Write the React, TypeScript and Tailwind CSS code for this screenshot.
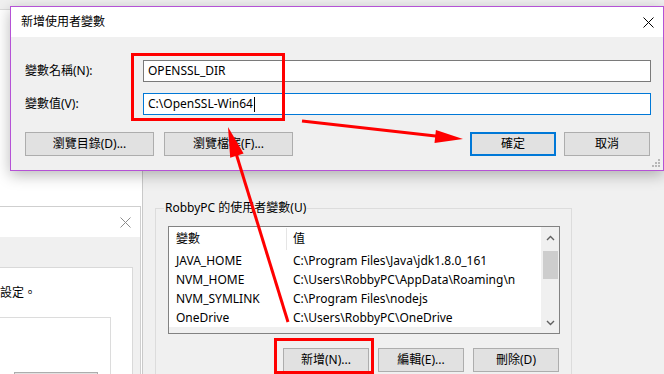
import React from 'react';

const font = "font-['Noto_Sans','Noto_Sans_CJK_TC',sans-serif]";

const CloseX = ({ color }: { color: string }) => (
  <svg width="11" height="11" viewBox="0 0 11 11">
    <path d="M0.5 0.5 L10.5 10.5 M10.5 0.5 L0.5 10.5" stroke={color} strokeWidth="1" fill="none" />
  </svg>
);

const Btn = ({ label, className }: { label: string; className: string }) => (
  <div className={`flex h-[24px] shrink-0 items-center justify-center bg-[#e1e1e1] text-[12px] text-black ${className}`}>
    {label}
  </div>
);

const rows = [
  ['JAVA_HOME', 'C:\\Program Files\\Java\\jdk1.8.0_161'],
  ['NVM_HOME', 'C:\\Users\\RobbyPC\\AppData\\Roaming\\n'],
  ['NVM_SYMLINK', 'C:\\Program Files\\nodejs'],
  ['OneDrive', 'C:\\Users\\RobbyPC\\OneDrive'],
];

export default function App() {
  return (
    <div className={`relative h-[374px] w-[664px] overflow-hidden bg-[#f0f0f0] text-[12px] text-black ${font}`}>
      {/* window far behind, left */}
      <div className="absolute left-0 top-[9px] bottom-0 w-[143px] border-t border-[#dadada] bg-white" />

      {/* environment variables window */}
      <div className="absolute left-[142px] top-[9px] right-0 bottom-0 border-l border-[#c9c9c9] bg-[#f0f0f0]">
        <div className="pl-[12px] pt-[199px]">
          <div className="relative h-[200px] w-[417px] border border-[#dcdcdc]">
            <span className="absolute -top-[10px] left-[8px] bg-[#f0f0f0] px-[1px] leading-[18px]">
              RobbyPC 的使用者變數(U)
            </span>
            <div className="pl-[12px] pt-[17px]">
              <div className="flex h-[108px] w-[392px] border border-[#828282] bg-white">
                <div className="flex w-[372px] flex-col">
                  <div className="flex h-[24px] shrink-0 items-center">
                    <div className="w-[117px] pl-[7px]">變數</div>
                    <div className="h-[22px] w-px bg-[#e5e5e5]" />
                    <div className="pl-[6px]">值</div>
                  </div>
                  {rows.map(([k, v]) => (
                    <div key={k} className="flex h-[19px] shrink-0 items-center whitespace-nowrap">
                      <div className="w-[118px] pl-[7px]">{k}</div>
                      <div className="w-[254px] overflow-hidden pl-[6px]">{v}</div>
                    </div>
                  ))}
                  <div className="mt-auto h-[6px] shrink-0 bg-[#f0f0f0]" />
                </div>
                <div className="flex w-[18px] flex-col items-center bg-[#f0f0f0]">
                  <div className="flex h-[22px] shrink-0 items-center justify-center">
                    <svg width="9" height="6" viewBox="0 0 9 6">
                      <path d="M1 5 L4.5 1.5 L8 5" stroke="#606060" strokeWidth="1.4" fill="none" />
                    </svg>
                  </div>
                  <div className="mt-[2px] h-[28px] w-[15px] shrink-0 bg-[#cdcdcd]" />
                  <div className="mt-auto flex h-[20px] shrink-0 items-center justify-center">
                    <svg width="9" height="6" viewBox="0 0 9 6">
                      <path d="M1 1 L4.5 4.5 L8 1" stroke="#606060" strokeWidth="1.4" fill="none" />
                    </svg>
                  </div>
                </div>
              </div>
              <div className="mt-[14px] flex w-[391px] justify-end gap-[9px]">
                <Btn label="新增(N)..." className="w-[86px] border border-[#adadad]" />
                <Btn label="編輯(E)..." className="w-[86px] border border-[#adadad]" />
                <Btn label="刪除(D)" className="w-[86px] border border-[#adadad]" />
              </div>
            </div>
          </div>
        </div>
      </div>

      {/* small window on the left */}
      <div className="absolute left-0 top-[206px] bottom-0 flex w-[141px] flex-col overflow-hidden border-t border-r border-[#cfcfcf] bg-[#f0f0f0]">
        <div className="flex h-[30px] shrink-0 items-center justify-end bg-white pr-[9px]">
          <CloseX color="#8c8c8c" />
        </div>
        <div className="mt-[30px] flex w-[133px] shrink-0 flex-col border-t border-r border-[#d9d9d9] bg-white">
          <div className="mt-[16px] flex h-[18px] shrink-0 items-center whitespace-nowrap">
            設定。
          </div>
          <div className="mt-[15px] flex h-[80px] w-[111px] shrink-0 flex-col border-t border-r border-[#dcdcdc]">
            <div className="ml-[14px] mt-[54px] h-[24px] w-[84px] shrink-0 border border-[#adadad] bg-[#e1e1e1]" />
          </div>
        </div>
      </div>

      {/* new user variable dialog */}
      <div className="absolute left-[10px] top-[6px] flex h-[165px] w-[654px] flex-col border border-[#b552d6] bg-[#f0f0f0] shadow-[0_4px_14px_rgba(0,0,0,0.28)]">
        <div className="flex h-[30px] shrink-0 items-center justify-between bg-white pl-[10px] pr-[9px]">
          <span>新增使用者變數</span>
          <CloseX color="#000000" />
        </div>
        <div className="flex flex-col pl-[14px] pt-[23px]">
          <div className="flex h-[22px] items-center">
            <span className="w-[118px]">變數名稱(N):</span>
            <div className="flex h-[22px] w-[508px] items-center border border-[#7a7a7a] bg-white pl-[4px]">
              OPENSSL_DIR
            </div>
          </div>
          <div className="mt-[11px] flex h-[22px] items-center">
            <span className="w-[118px]">變數值(V):</span>
            <div className="flex h-[22px] w-[508px] items-center border border-[#0078d7] bg-white pl-[4px]">
              C:\OpenSSL-Win64
              <span className="ml-px h-[15px] w-px bg-black" />
            </div>
          </div>
          <div className="mt-[17px] flex w-[625px]">
            <div className="flex gap-[10px]">
              <Btn label="瀏覽目錄(D)..." className="w-[129px] border border-[#adadad]" />
              <Btn label="瀏覽檔案(F)..." className="w-[129px] border border-[#adadad]" />
            </div>
            <div className="ml-auto flex gap-[8px]">
              <Btn label="確定" className="w-[86px] border-2 border-[#0078d7]" />
              <Btn label="取消" className="w-[86px] border border-[#adadad]" />
            </div>
          </div>
        </div>
        <svg className="absolute right-[2px] bottom-[2px]" width="9" height="9" viewBox="0 0 9 9">
          <rect x="6" y="0" width="2" height="2" fill="#b8b8b8" />
          <rect x="3" y="3" width="2" height="2" fill="#b8b8b8" />
          <rect x="6" y="3" width="2" height="2" fill="#b8b8b8" />
          <rect x="0" y="6" width="2" height="2" fill="#b8b8b8" />
          <rect x="3" y="6" width="2" height="2" fill="#b8b8b8" />
          <rect x="6" y="6" width="2" height="2" fill="#b8b8b8" />
        </svg>
      </div>

      {/* red annotations */}
      <div className="absolute left-[131px] top-[53px] h-[68px] w-[154px] border-[3px] border-[#ff0000]" />
      <div className="absolute left-[274px] top-[338px] h-[36px] w-[100px] border-[3px] border-[#ff0000]" />
      <svg className="absolute left-0 top-0" width="664" height="374" viewBox="0 0 664 374">
        <line x1="302" y1="121" x2="440" y2="136.5" stroke="#ff0000" strokeWidth="3" />
        <polygon points="463,139 435.9,130 434.5,143" fill="#ff0000" />
        <line x1="288" y1="322" x2="235" y2="150" stroke="#ff0000" strokeWidth="3" />
        <polygon points="228,127 243.6,153.5 230.2,157.7" fill="#ff0000" />
      </svg>
    </div>
  );
}
